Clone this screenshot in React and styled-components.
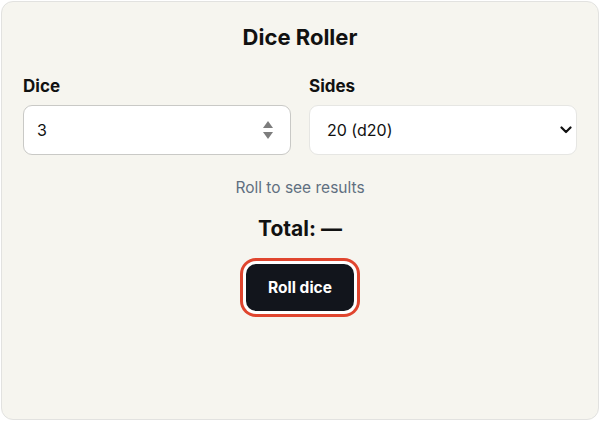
import styled, { createGlobalStyle } from 'styled-components'

const GlobalStyle = createGlobalStyle`
  html, body {
    margin: 0;
    padding: 0;
    background: #ffffff;
  }
  body {
    font-family: Inter, "Noto Sans", sans-serif;
    color: #111111;
  }
  * {
    box-sizing: border-box;
  }
`

const Page = styled.div`
  padding: 1px;
`

const Card = styled.main`
  height: 419px;
  background: #f6f5ef;
  border: 1px solid #e2e2e0;
  border-radius: 12px;
  padding: 21px 21px 0 21px;
  display: flex;
  flex-direction: column;
  align-items: center;
`

const Title = styled.h1`
  margin: 0;
  font-size: 22px;
  line-height: 28px;
  font-weight: 700;
`

const Fields = styled.div`
  width: 100%;
  margin-top: 23px;
  display: grid;
  grid-template-columns: minmax(0, 1fr) minmax(0, 1fr);
  gap: 18px;
`

const Field = styled.label`
  display: flex;
  flex-direction: column;
  gap: 7px;
`

const Label = styled.span`
  font-size: 17px;
  line-height: 24px;
  font-weight: 700;
`

const Control = styled.div`
  height: 50px;
  display: flex;
  align-items: center;
  background: #ffffff;
  border: 1px solid ${(props) => (props.$strong ? '#c9c9c6' : '#e6e6e3')};
  border-radius: 9px;
  padding: 0 ${(props) => props.$padRight}px 0 ${(props) => props.$padLeft}px;
`

const Value = styled.input`
  flex: 1;
  min-width: 0;
  border: none;
  outline: none;
  background: transparent;
  font-family: inherit;
  font-size: 16px;
  color: #111111;
  padding: 0;
`

const SelectText = styled.span`
  flex: 1;
  font-size: 16px;
  color: #111111;
`

const Hint = styled.p`
  margin: 22px 0 0 0;
  font-size: 15.5px;
  line-height: 22px;
  color: #5f6f80;
`

const Total = styled.h2`
  margin: 16px 0 0 0;
  font-size: 21px;
  line-height: 28px;
  font-weight: 700;
`

const RollButton = styled.button`
  margin-top: 21px;
  height: 47px;
  padding: 0 22px;
  border: none;
  border-radius: 10px;
  background: #12151c;
  color: #ffffff;
  font-family: inherit;
  font-size: 15.5px;
  font-weight: 650;
  box-shadow: 0 0 0 3px #ffffff, 0 0 0 6px #e0452e;
  cursor: pointer;
`

function Stepper() {
  return (
    <svg width="12" height="20" viewBox="0 0 12 20">
      <path d="M6 1 L11 8 L1 8 Z" fill="#7d7d7d" />
      <path d="M1 12 L11 12 L6 19 Z" fill="#7d7d7d" />
    </svg>
  )
}

function Chevron() {
  return (
    <svg width="12" height="8" viewBox="0 0 12 8">
      <path
        d="M1.5 1.5 L6 6 L10.5 1.5"
        fill="none"
        stroke="#111111"
        strokeWidth="2.2"
        strokeLinecap="round"
        strokeLinejoin="round"
      />
    </svg>
  )
}

export default function App() {
  return (
    <Page>
      <GlobalStyle />
      <Card>
        <Title>Dice Roller</Title>
        <Fields>
          <Field>
            <Label>Dice</Label>
            <Control $strong $padLeft={13} $padRight={16}>
              <Value defaultValue="3" />
              <Stepper />
            </Control>
          </Field>
          <Field>
            <Label>Sides</Label>
            <Control $padLeft={17} $padRight={4}>
              <SelectText>20 (d20)</SelectText>
              <Chevron />
            </Control>
          </Field>
        </Fields>
        <Hint>Roll to see results</Hint>
        <Total>Total: —</Total>
        <RollButton>Roll dice</RollButton>
      </Card>
    </Page>
  )
}
